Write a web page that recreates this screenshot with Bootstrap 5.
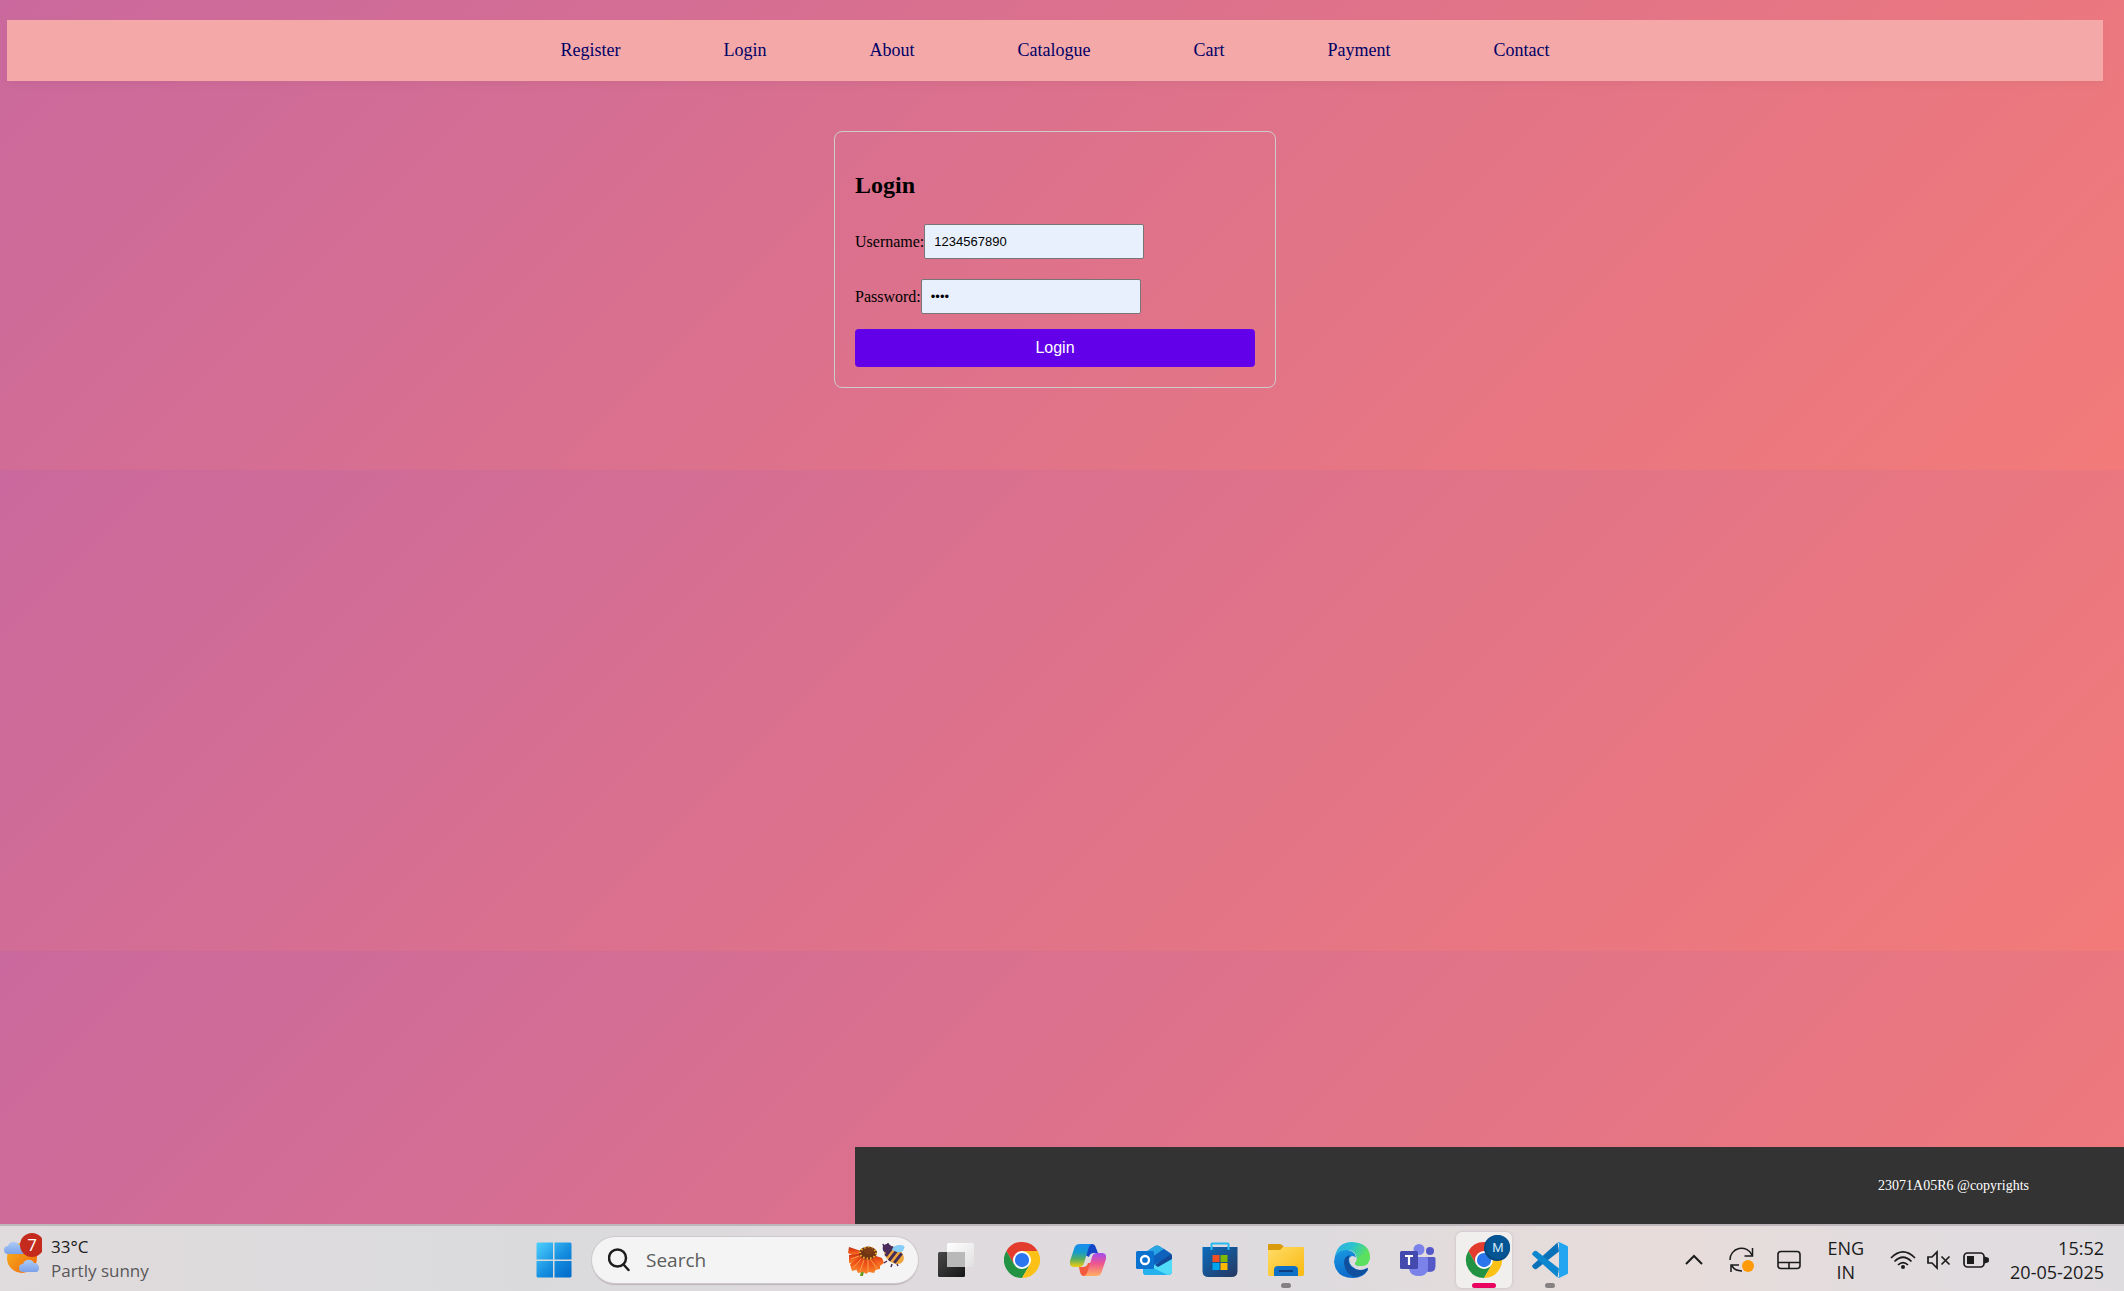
<!DOCTYPE html>
<html lang="en">
<head>
<meta charset="utf-8">
<meta name="viewport" content="width=device-width, initial-scale=1">
<title>Login</title>
<link href="https://cdn.jsdelivr.net/npm/bootstrap@5.3.0/dist/css/bootstrap.min.css" rel="stylesheet">
<style>
  body {
    font-family: "Liberation Serif", "Times New Roman", serif;
    font-size: 16px;
    color: #000;
    background: linear-gradient(135deg, #ca699d, #de728b, #f27b79) 0 -11px / 100% 481px repeat-y;
  }
  .site-nav {
    margin: 20px 21px 0 7px;
    padding: 20px;
    gap: 103px;
    background: #f4a8a8;
    box-shadow: 0 4px 8px rgba(0, 0, 0, .03);
    font-size: 18px;
    line-height: 21px;
  }
  .site-nav a { color: #000066; text-decoration: none; }
  .login-area { padding-right: 14px; }
  .login-box {
    width: 442px;
    margin-top: 50px;
    padding: 20px;
    border: 1px solid #ccc;
    border-radius: 8px;
  }
  .login-box h2 { font-size: 24px; font-weight: 700; line-height: 26px; margin: 20px 0 26px; }
  .field-row { margin-bottom: 20px; }
  .field-row input {
    width: 220px;
    height: 35px;
    padding: 0 9px;
    border: 1px solid #767676;
    border-radius: 2px;
    background: #e8f0fe;
    font: 13px "Liberation Sans", Arial, sans-serif;
  }
  .login-btn {
    height: 38px;
    margin-top: -5px;
    border: 0;
    border-radius: 4px;
    background: #6200ea;
    color: #fff;
    font: 16px "Liberation Sans", Arial, sans-serif;
  }
  .site-footer {
    margin-left: 855px;
    padding: 28px 95px 28px 0;
    background: #333;
    color: #fff;
    font-size: 14px;
    line-height: 21px;
  }
  .taskbar {
    display: grid;
    grid-template-columns: 1fr auto 1fr;
    height: 67px;
    padding: 6px 20px 3px 0;
    overflow: hidden;
    border-top: 2px solid #bdb6ba;
    background: linear-gradient(90deg, #e0dbdd, #dadadc 25%, #dfdadd 40%, #dedbde 62%, #e8dcda 78%, #e2dcde 88%, #dfdce0);
    font: 18px/24px "Open Sans", "Noto Sans", sans-serif;
    color: #1b1b1b;
  }
  .taskbar svg { display: block; flex: none; }
  .task-items { gap: 10px; }
  .task-btn {
    position: relative;
    width: 56px;
    height: 56px;
    padding: 0;
    border: 0;
    border-radius: 6px;
    background: none;
  }
  .task-btn.current { background: #f1eeee; box-shadow: 0 0 2px 1px #d2cbce; }
  .task-btn.opened::after {
    content: "";
    position: absolute;
    left: 50%;
    bottom: 0;
    width: 10px;
    height: 5px;
    border-radius: 3px;
    background: #858082;
    transform: translateX(-50%);
  }
  .task-btn.current::after { width: 24px; background: #ea005e; }
  .search-pill {
    width: 326px;
    height: 46px;
    padding: 0 12px 0 16px;
    border-radius: 23px;
    background: #f4f4f4;
    box-shadow: 0 0 0 1px #cfc9cd, 0 2px 1px #b9b3b6;
  }
  .search-pill input {
    min-width: 0;
    padding: 0;
    border: 0;
    background: none;
    color: #5c5c5c;
    font-size: 19px;
  }
  .search-pill input::placeholder { color: #5c5c5c; }
  .weather { padding-left: 3px; gap: 9px; font-size: 17px; }
  .weather-text { padding-top: 3px; }
  .weather-note { color: #5a5759; }
  .after-sm { margin-right: 10px; }
  .after-md { margin-right: 20px; }
  .after-lg { margin-right: 26px; }
</style>
</head>
<body class="d-flex flex-column min-vh-100">

<nav class="site-nav d-flex justify-content-center">
  <a href="#">Register</a>
  <a href="#">Login</a>
  <a href="#">About</a>
  <a href="#">Catalogue</a>
  <a href="#">Cart</a>
  <a href="#">Payment</a>
  <a href="#">Contact</a>
</nav>

<main class="login-area flex-grow-1 d-flex justify-content-center align-items-start">
  <form class="login-box">
    <h2>Login</h2>
    <div class="field-row d-flex align-items-center">
      <label for="user">Username:</label>
      <input id="user" type="text" value="1234567890">
    </div>
    <div class="field-row d-flex align-items-center">
      <label for="pass">Password:</label>
      <input id="pass" type="password" value="1234">
    </div>
    <button class="login-btn d-block w-100" type="button">Login</button>
  </form>
</main>

<footer class="site-footer text-end">23071A05R6 @copyrights</footer>

<div class="taskbar">
  <div class="weather d-flex align-items-start">
    <svg width="39" height="44" viewBox="0 0 39 44">
      <defs>
        <linearGradient id="sun" x2="1" y2="1"><stop stop-color="#f5b51d"/><stop offset="1" stop-color="#f2640e"/></linearGradient>
        <linearGradient id="cloud" x2="0" y2="1"><stop stop-color="#aecbf6"/><stop offset="1" stop-color="#7ba2ea"/></linearGradient>
      </defs>
      <circle cx="19" cy="26" r="15" fill="url(#sun)"/>
      <path d="M5 22a4 4 0 0 1 0-8 6 6 0 0 1 11-1 5 5 0 0 1 6 9z" fill="url(#cloud)"/>
      <path d="M20 40a4 4 0 0 1 0-8 6 6 0 0 1 11-1 5 5 0 0 1 3 9z" fill="url(#cloud)"/>
      <circle cx="29" cy="13" r="12" fill="#c42b1c"/>
      <text x="29" y="19" font-size="17" text-anchor="middle" fill="#fff">7</text>
    </svg>
    <div class="weather-text">33°C<br><span class="weather-note">Partly sunny</span></div>
  </div>

  <div class="task-items d-flex">
    <button class="task-btn d-flex align-items-center justify-content-center" type="button" aria-label="Start">
      <svg width="36" height="36" viewBox="0 0 36 36">
        <defs><linearGradient id="win" x2="1" y2="1" gradientUnits="userSpaceOnUse" gradientTransform="scale(36)"><stop stop-color="#4fd2ff"/><stop offset=".55" stop-color="#148ddf"/><stop offset="1" stop-color="#0067c8"/></linearGradient></defs>
        <path d="M1.500 .5H17V17.500H.5V1.500zM18.500 .5H34.500l1 1V17.500h-17zM.5 19H17V35.500H1.500l-1-1zM18.500 19h17v15.500l-1 1h-16z" fill="url(#win)"/>
      </svg>
    </button>
    <div class="search-pill d-flex align-items-center align-self-center">
      <svg width="22" height="24" viewBox="0 0 22 24" fill="none" stroke="#1d1d1d" stroke-width="2.500" stroke-linecap="round"><circle cx="9.500" cy="10" r="8.500"/><path d="M15.500 16.500l5 5.500"/></svg>
      <input class="flex-grow-1 ms-3" type="search" placeholder="Search" aria-label="Search">
      <svg width="58" height="36" viewBox="0 0 58 36">
        <defs><linearGradient id="petal" x2="0" y2="1"><stop stop-color="#b92d14"/><stop offset=".5" stop-color="#ee4f17"/><stop offset="1" stop-color="#f9852a"/></linearGradient></defs>
        <path d="M17 25l-2 9h-3l2-9z" fill="#679a20"/>
        <g fill="url(#petal)">
          <path d="M19 11L1 5l-1 6 6 3z"/><path d="M19 11L1 13l0 8 5 0z"/><path d="M19 11L2 22l2 7 4-1z"/><path d="M19 11L8 27l2 4 5-1z"/><path d="M19 11l-5 18 4 3 4-3z"/><path d="M19 11l2 19 5 1 2-4z"/><path d="M19 11l8 17 5-1 0-5z"/><path d="M19 11l13 13 4-3-2-5z"/>
        </g>
        <path d="M13 17L5 26M16 18l-4 11M20 18v12M22 17l7 9M11 14L3 17" stroke="#fda045" stroke-width="1"/>
        <ellipse cx="20" cy="11" rx="9" ry="6.500" fill="#6e3413"/>
        <ellipse cx="20" cy="11" rx="8" ry="5.500" fill="none" stroke="#f3b12c" stroke-width="2" stroke-dasharray="1.500 2"/>
        <ellipse cx="21" cy="9" rx="5" ry="3.500" fill="#7d3c16"/>
        <g transform="rotate(38 46 13)"><ellipse cx="46" cy="13" rx="11" ry="7.500" fill="#eda63c"/><path d="M40 7v12M45.500 5.500v15M51 7v12" stroke="#452b58" stroke-width="3"/><circle cx="36.500" cy="12" r="4.500" fill="#4a2d5c"/></g>
        <path d="M44 8q1-5 8-5 6 0 4 4t-7 3z" fill="#86cdf8"/>
        <path d="M36 5l-1-3M40 4l0-3M39 19l-3 2M44 22l-1 3M49 22l1 2" stroke="#4a2d5c" stroke-width="1.500"/>
      </svg>
    </div>
    <button class="task-btn d-flex align-items-center justify-content-center" type="button" aria-label="Task view">
      <svg width="36" height="36" viewBox="0 0 36 36">
        <defs><linearGradient id="tv1" x2="1" y2="1"><stop stop-color="#484848"/><stop offset="1" stop-color="#161616"/></linearGradient><linearGradient id="tv2" x2="1" y2="1"><stop stop-color="#fff"/><stop offset="1" stop-color="#e0e0e0"/></linearGradient></defs>
        <rect y="10" width="27" height="25" rx="1.500" fill="url(#tv1)"/><rect x="9" y="1" width="27" height="24" rx="1.500" fill="url(#tv2)"/><path d="M9 10h18v15H9z" fill="#b9b9b9"/>
      </svg>
    </button>
    <button class="task-btn d-flex align-items-center justify-content-center" type="button" aria-label="Chrome">
      <svg width="36" height="36" viewBox="0 0 48 48">
        <g id="chrome"><path d="M24 12h20.800A24 24 0 0 0 3.200 12L13.600 30z" fill="#e33b2e"/><path d="M13.600 30L3.200 12A24 24 0 0 0 24 48l10.400-18z" fill="#229342"/><path d="M34.400 30L24 48A24 24 0 0 0 44.800 12H24z" fill="#fbc116"/><circle cx="24" cy="24" r="12" fill="#fff"/><circle cx="24" cy="24" r="9.500" fill="#2b76ec"/></g>
      </svg>
    </button>
    <button class="task-btn d-flex align-items-center justify-content-center" type="button" aria-label="Copilot">
      <svg width="36" height="34" viewBox="0 0 36 34">
        <defs>
          <linearGradient id="cp1" x2="0" y2="1"><stop stop-color="#1a8bf0"/><stop offset=".35" stop-color="#159ad0"/><stop offset=".65" stop-color="#55ad62"/><stop offset="1" stop-color="#f5cc10"/></linearGradient>
          <linearGradient id="cp2" x2="0" y2="1"><stop stop-color="#a24cf0"/><stop offset=".45" stop-color="#ee5590"/><stop offset="1" stop-color="#ffb062"/></linearGradient>
        </defs>
        <path d="M17 1h5q3 0 4 4l2 5h-4q-4 0-5 4l-4-2z" fill="#1646c8"/>
        <path d="M19 33h-5q-3 0-4-4l-1-5h4q4 0 5-4l4 0z" fill="#f45b3c"/>
        <path d="M10 1h12q-3 1-4 6l-4 13q-1 4-5 4H4q-5 0-4-6L4 6q1-5 6-5z" fill="url(#cp1)"/>
        <path d="M26 33H14q3-1 4-6l4-13q1-4 5-4h5q5 0 4 6l-4 12q-1 5-6 5z" fill="url(#cp2)"/>
      </svg>
    </button>
    <button class="task-btn d-flex align-items-center justify-content-center" type="button" aria-label="Outlook">
      <svg width="36" height="32" viewBox="0 0 36 32">
        <path d="M7 10L19 2q2-1 4 0l11 7q2 1 2 3v15q0 4-4 4H10q-3 0-3-4z" fill="#1470c8"/>
        <path d="M8 9l11-7q2-1 4 0l5 3-13 9z" fill="#2aa5e4"/>
        <path d="M28 5l7 5-16 11-4-7z" fill="#0e62bd"/>
        <path d="M36 12v15q0 4-4 4H10q-2 0-3-2l11-8z" fill="#50dcf8"/><path d="M7 20l8 3 17 8H10q-3 0-3-4z" fill="#24b2ee"/>
        <path d="M36 12v3L22 23l-3-2 16-11z" fill="#124898"/>
        <rect y="7" width="18" height="18" rx="1.500" fill="#0b72d0"/><circle cx="9" cy="16" r="4" fill="none" stroke="#fff" stroke-width="2.300"/>
      </svg>
    </button>
    <button class="task-btn d-flex align-items-center justify-content-center" type="button" aria-label="Store">
      <svg width="36" height="36" viewBox="0 0 36 36">
        <defs><linearGradient id="st" x2="1" y2="1"><stop stop-color="#0a6cbe"/><stop offset="1" stop-color="#263860"/></linearGradient></defs>
        <path d="M.5 5h35v24q0 6-6 6h-23q-6 0-6-6z" fill="url(#st)"/><path d="M9.500 8V2q0-.500.500-.500h16q.5 0 .5.500V8" fill="none" stroke="#29b9f2" stroke-width="2"/>
        <path d="M10.500 13h7v7h-7z" fill="#f25022"/><path d="M18.500 13h7v7h-7z" fill="#7fba00"/><path d="M10.500 21h7v7h-7z" fill="#00a4ef"/><path d="M18.500 21h7v7h-7z" fill="#ffb900"/>
      </svg>
    </button>
    <button class="task-btn opened d-flex align-items-center justify-content-center" type="button" aria-label="File Explorer">
      <svg width="36" height="34" viewBox="0 0 36 34">
        <defs><linearGradient id="fe" x2="1" y2="1"><stop stop-color="#ffdc68"/><stop offset="1" stop-color="#fab90f"/></linearGradient></defs>
        <path d="M0 2q0-1 1-1h10q2 0 3 1l2 2h19q1 0 1 1v8H0z" fill="#d99a0b"/><path d="M0 7h12l3-3h21v27q0 2-2 2H2q-2 0-2-2z" fill="url(#fe)"/>
        <path d="M6 33v-6q0-4 4-4h16q4 0 4 4v6z" fill="#0f70c5"/><path d="M11 28h14" stroke="#0b3f82" stroke-width="2"/>
      </svg>
    </button>
    <button class="task-btn d-flex align-items-center justify-content-center" type="button" aria-label="Edge">
      <svg width="36" height="36" viewBox="0 0 36 36">
        <defs><linearGradient id="eg" x2="1" y2=".4"><stop stop-color="#2fa9ea"/><stop offset=".5" stop-color="#2cc3cd"/><stop offset="1" stop-color="#63e44f"/></linearGradient><linearGradient id="eb" x2=".4" y2="1"><stop stop-color="#1a9be3"/><stop offset="1" stop-color="#0a66c9"/></linearGradient></defs>
        <path d="M1 14Q5 6 14 8q8 2 8 8l12 12q-5 8-15 8Q2 36 0 20z" fill="url(#eb)"/>
        <path d="M16 13q-6 1-6 8 1 11 11 14 9-1 13-8 0-2-1-1-3 2-7 2-8 0-11-7-1-4 1-8z" fill="#104f9d"/>
        <path d="M1 14Q4 0 18 0q17 1 18 14 0 10-9 10-6 0-6-3 2-2 2-4-1-9-10-9Q5 8 1 14z" fill="url(#eg)"/>
        <path d="M15 17q1-3 4-3 4 1 4 4 0 2-2 3 0 3 5 3 5 0 8-3l1 4-2 1q-3 2-7 2-11-2-11-11z" fill="#dedbde"/>
        <path d="M21 21q2-2 2-4l6-5 7 2q0 10-9 10-6 0-6-3z" fill="#5ce05f"/>
      </svg>
    </button>
    <button class="task-btn d-flex align-items-center justify-content-center" type="button" aria-label="Teams">
      <svg width="36" height="36" viewBox="0 0 36 36">
        <circle cx="30" cy="9" r="4" fill="#5559c8"/><path d="M24 15h10q1.500 0 1.500 1.500V24q0 6-6 6-5 0-6-6z" fill="#5559c8"/>
        <circle cx="19" cy="7.500" r="5.500" fill="#7b83eb"/><path d="M9 15h17.500q1.500 0 1.500 1.500V25q0 9-9 9-10 0-10-9z" fill="#7b83eb"/>
        <rect y="9" width="18" height="18" rx="1.500" fill="#4349ad"/><path d="M5 14h8M9 14v9" stroke="#fff" stroke-width="2.200"/>
      </svg>
    </button>
    <button class="task-btn opened current d-flex align-items-center justify-content-center" type="button" aria-label="Chrome, profile M">
      <svg width="56" height="56" viewBox="0 0 56 56">
        <g transform="translate(10 10) scale(.75)"><use href="#chrome"/></g>
        <circle cx="41" cy="16" r="13" fill="#07477f"/><circle cx="42" cy="15" r="12" fill="#055594"/><text x="42" y="20" font-size="13" text-anchor="middle" fill="#cfe6fa" font-family="Roboto, sans-serif">M</text>
      </svg>
    </button>
    <button class="task-btn opened d-flex align-items-center justify-content-center" type="button" aria-label="VS Code">
      <svg width="36" height="36" viewBox="0 0 36 36">
        <path d="M27 9.500L4.500 27q-1 .700-2 0L.6 25.200q-1-1.200 0-2.200L25.500 .5z" fill="#0a71b8"/>
        <path d="M27 26.500L4.500 9q-1-.700-2 0L.6 10.800q-1 1.200 0 2.200l24.900 22.500z" fill="#0c87cf"/>
        <path d="M25.500.5q1-.7 2-.2L35 3.700q1 .5 1 1.500v25.600q0 1-1 1.500l-7.500 3.400q-1 .500-2-.2 1.500.5 1.500-1.500V2q0-2-1.500-1.500z" fill="#23a5f2"/>
      </svg>
    </button>
  </div>

  <div class="d-flex align-items-center justify-content-end">
    <svg class="after-lg" width="18" height="12" viewBox="0 0 18 12" fill="none" stroke="#1b1b1b" stroke-width="2"><path d="M1 10l8-8 8 8"/></svg>
    <svg class="after-md" width="28" height="26" viewBox="0 0 28 26" fill="none" stroke="#1b1b1b" stroke-width="1.500"><path d="M1 13A11.500 11.500 0 0 1 23 8M23.500 1v8h-8M2 25v-7h8M3 19q3 5 10 5"/><circle cx="19" cy="19" r="6" fill="#ff9a0a" stroke="none"/></svg>
    <svg class="after-lg" width="24" height="20" viewBox="0 0 24 20" fill="none" stroke="#1b1b1b" stroke-width="1.600"><rect x="1" y="1.500" width="22" height="17" rx="3"/><path d="M1 12.500h22M12 12.500v6"/></svg>
    <div class="text-center after-lg">ENG<br>IN</div>
    <svg class="after-sm" width="26" height="20" viewBox="0 0 26 20" fill="none" stroke="#1b1b1b" stroke-width="1.700"><path d="M1 8q12-12 24 0M4.500 11.500q8.500-8.500 17 0M8 15q5-5 10 0"/><circle cx="13" cy="17" r="2" fill="#1b1b1b" stroke="none"/></svg>
    <svg class="after-sm" width="26" height="20" viewBox="0 0 26 20" fill="none" stroke="#1b1b1b" stroke-width="1.700"><path d="M2 7h4l5-5v16l-5-5H2zM15.500 6.500l8 8M23.500 6.500l-8 8"/></svg>
    <svg class="after-md" width="28" height="20" viewBox="0 0 28 20" fill="none" stroke="#1b1b1b" stroke-width="1.700"><rect x="2" y="3" width="20" height="14" rx="3.500"/><path d="M5 6h7v8H5z" fill="#1b1b1b" stroke="none"/><path d="M23 7.500l3 1v3l-3 1z" fill="#1b1b1b"/></svg>
    <div class="text-end">15:52<br>20-05-2025</div>
  </div>
</div>

<script src="https://cdn.jsdelivr.net/npm/bootstrap@5.3.0/dist/js/bootstrap.bundle.min.js"></script>
</body>
</html>
